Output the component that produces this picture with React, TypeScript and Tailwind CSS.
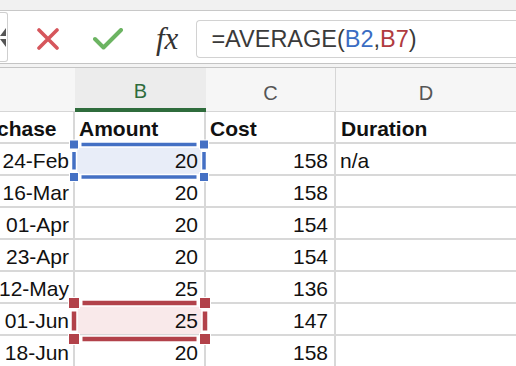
const rows = [
  ["24-Feb", "20", "158", "n/a"],
  ["16-Mar", "20", "158", ""],
  ["01-Apr", "20", "154", ""],
  ["23-Apr", "20", "154", ""],
  ["12-May", "25", "136", ""],
  ["01-Jun", "25", "147", ""],
  ["18-Jun", "20", "158", ""],
];

type SelProps = { x1: number; y1: number; x2: number; y2: number; color: string; t: number; h: number };

// range highlight drawn over the grid: broken border + corner handles
const Selection = ({ x1, y1, x2, y2, color, t, h }: SelProps) => {
  const g = 3;
  const o = h / 2 + g;
  return (
    <g>
      <rect x={x1} y={y1} width={x2 - x1} height={y2 - y1} fill="none" stroke="#fff" strokeWidth={t + 3} />
      <line x1={x1 + o} y1={y1} x2={x2 - o} y2={y1} stroke={color} strokeWidth={t} />
      <line x1={x1 + o} y1={y2} x2={x2 - o} y2={y2} stroke={color} strokeWidth={t} />
      <line x1={x1} y1={y1 + o} x2={x1} y2={y2 - o} stroke={color} strokeWidth={t} />
      <line x1={x2} y1={y1 + o} x2={x2} y2={y2 - o} stroke={color} strokeWidth={t} />
      {[
        [x1, y1],
        [x2, y1],
        [x1, y2],
        [x2, y2],
      ].map(([cx, cy], i) => (
        <rect key={i} x={cx - h / 2} y={cy - h / 2} width={h} height={h} fill={color} stroke="#fff" strokeWidth={1} />
      ))}
    </g>
  );
};

export default function App() {
  return (
    <div
      className="relative w-[516px] h-[366px] overflow-hidden bg-white text-[#111]"
      style={{ fontFamily: '"Liberation Sans", Arial, sans-serif' }}
    >
      {/* window strip */}
      <div className="h-[11px] bg-[#f1f1f1] border-b border-[#c8c8c8]" />

      {/* formula toolbar */}
      <div className="flex items-center h-[53px] pt-[3px] border-b border-[#c4c4c4]">
        <div className="w-[8px] h-[50px] -mt-[3px] border border-l-0 border-[#cfcfcf] rounded-r-[3px] flex flex-col justify-center gap-[3px]">
          <svg width="6" height="8" viewBox="0 0 6 8">
            <path d="M0 8 L6 0 L6 8 Z" fill="#555" />
          </svg>
          <svg width="6" height="8" viewBox="0 0 6 8">
            <path d="M0 0 L6 0 L6 8 Z" fill="#555" />
          </svg>
        </div>
        <svg className="ml-[29px]" width="22" height="22" viewBox="0 0 22 22">
          <path d="M2 2 L20 20 M20 2 L2 20" stroke="#d6565c" strokeWidth="3.6" strokeLinecap="round" />
        </svg>
        <svg className="ml-[34px]" width="30" height="22" viewBox="0 0 30 22">
          <path d="M2 11 L10.5 19.5 L28 2" fill="none" stroke="#6cb462" strokeWidth="4" strokeLinecap="round" strokeLinejoin="round" />
        </svg>
        <span
          className="ml-[33px] text-[31px] italic text-[#333] leading-none"
          style={{ fontFamily: '"Liberation Serif", "DejaVu Serif", serif' }}
        >
          fx
        </span>
        <div className="ml-[18px] flex-1 h-[38px] border border-r-0 border-[#d2d2d2] rounded-l-[4px] flex items-center pl-[14px] pt-[2px] text-[23.5px] text-[#3a3a3a]">
          =AVERAGE(<span className="text-[#3a6cc3]">B2</span>,<span className="text-[#b03b3f]">B7</span>)
        </div>
      </div>

      {/* gap between toolbar and sheet */}
      <div className="h-[4px] bg-[#f3f3f3] border-b border-[#c4c4c4]" />

      {/* sheet */}
      <div className="ml-[-43px]">
        <div className="grid grid-cols-[118px_131px_130px_1fr] h-[44px] bg-[#f6f6f6] text-[20px] text-[#555]">
          <div className="border-b border-[#d6d6d6]" />
          <div className="bg-[#ececec] border-b-4 border-[#2f6c3c] text-[#2f6c3c] flex items-center justify-center pt-[6px]">B</div>
          <div className="border-b border-r border-[#d6d6d6] flex items-center justify-center pt-[6px]">C</div>
          <div className="border-b border-[#d6d6d6] flex items-center justify-center pt-[6px]">D</div>
        </div>

        <div className="grid grid-cols-[118px_131px_130px_1fr] text-[21px]">
          {["Purchase", "Amount", "Cost", "Duration"].map((h, i) => (
            <div key={h} className={`h-[32px] pt-[4px] border-b-2 border-[#d8d8d8] flex items-center font-bold ${i < 3 ? "border-r-2" : ""} ${i === 1 || i === 2 ? "pl-[4px]" : "pl-[5px]"}`}>
              {h}
            </div>
          ))}
          {rows.map((r, ri) =>
            r.map((v, ci) => (
              <div
                key={`${ri}-${ci}`}
                className={`h-[32px] pt-[3px] border-b-2 border-[#d8d8d8] flex items-center ${ci < 3 ? "border-r-2 justify-end" : "pl-[4px]"} ${ci === 0 ? "pr-[4px]" : "pr-[6px]"} ${ri === 0 && ci === 1 ? "bg-[#e8edf8]" : ""} ${ri === 5 && ci === 1 ? "bg-[#f9e9ea]" : ""}`}
              >
                {v}
              </div>
            ))
          )}
        </div>
      </div>

      <svg className="absolute top-0 left-0 pointer-events-none" width="516" height="366">
        <Selection x1={74} y1={144.5} x2={204} y2={177} color="#4470c4" t={3.5} h={9} />
        <Selection x1={74} y1={303} x2={205} y2={339} color="#b2424a" t={4.5} h={11} />
      </svg>
    </div>
  );
}
